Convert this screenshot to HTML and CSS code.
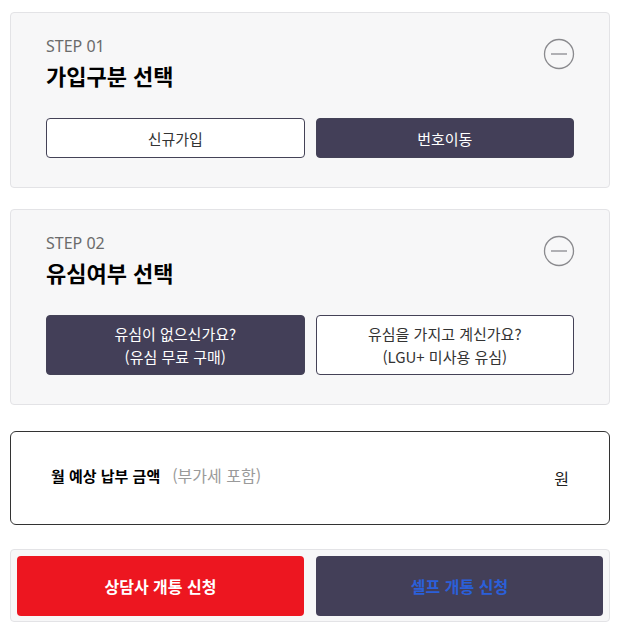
FILE: index.html
```html
<!DOCTYPE html>
<html lang="ko">
<head>
<meta charset="utf-8">
<link rel="stylesheet" href="styles.css">
</head>
<body>
<div class="page">
  <section class="card step-card">
    <div class="step-head">
      <div>
        <p class="step-no">STEP 01</p>
        <h2 class="step-title">가입구분 선택</h2>
      </div>
      <svg class="toggle" width="32" height="32" viewBox="0 0 32 32"><circle cx="16" cy="16" r="14.5" fill="none" stroke="#8a8a8e" stroke-width="1.3"/><line x1="8" y1="16" x2="24" y2="16" stroke="#8a8a8e" stroke-width="1.3"/></svg>
    </div>
    <div class="options">
      <button class="opt">신규가입</button>
      <button class="opt opt-on">번호이동</button>
    </div>
  </section>

  <section class="card step-card">
    <div class="step-head">
      <div>
        <p class="step-no">STEP 02</p>
        <h2 class="step-title">유심여부 선택</h2>
      </div>
      <svg class="toggle" width="32" height="32" viewBox="0 0 32 32"><circle cx="16" cy="16" r="14.5" fill="none" stroke="#8a8a8e" stroke-width="1.3"/><line x1="8" y1="16" x2="24" y2="16" stroke="#8a8a8e" stroke-width="1.3"/></svg>
    </div>
    <div class="options">
      <button class="opt opt-tall opt-on">유심이 없으신가요?<br>(유심 무료 구매)</button>
      <button class="opt opt-tall">유심을 가지고 계신가요?<br>(LGU+ 미사용 유심)</button>
    </div>
  </section>

  <section class="price">
    <p class="price-label"><strong>월 예상 납부 금액</strong><span class="vat">(부가세 포함)</span></p>
    <span class="won">원</span>
  </section>

  <section class="actions">
    <button class="act act-red">상담사 개통 신청</button>
    <button class="act act-dark">셀프 개통 신청</button>
  </section>
</div>
</body>
</html>
```

FILE: styles.css
```css
* { box-sizing: border-box; }
body {
  margin: 0;
  background: #fff;
  font-family: "Noto Sans", "Noto Sans CJK KR", sans-serif;
  color: #111;
}
.page {
  width: 600px;
  margin: 12px 0 0 10px;
  display: flex;
  flex-direction: column;
}
.card {
  background: #f7f7f8;
  border: 1px solid #e3e3e6;
  border-radius: 4px;
}
.step-card {
  padding: 23px 35px 29px 35px;
  margin-bottom: 21px;
}
.step-head {
  display: flex;
  justify-content: space-between;
  align-items: flex-start;
}
.toggle { margin-top: 2px; margin-right: -1px; }
.step-no {
  margin: 0;
  font-size: 16px;
  line-height: 20px;
  color: #6b6b6b;
}
.step-title {
  margin: 6px 0 0;
  font-size: 22px;
  line-height: 26px;
  font-weight: 700;
  font-family: "Noto Sans CJK KR", sans-serif;
  color: #000;
}
.options {
  display: grid;
  grid-template-columns: 1fr 1fr;
  gap: 11px;
  margin-top: 30px;
}
.opt {
  height: 40px;
  border: 1px solid #444257;
  border-radius: 4px;
  background: #fff;
  color: #333;
  font-family: "Noto Sans CJK KR", sans-serif;
  font-size: 15px;
  line-height: 23px;
  padding: 0;
}
.opt-tall { height: 60px; }
.opt-on {
  background: #433f58;
  color: #fff;
}
.price {
  margin-top: 5px;
  height: 94px;
  border: 1px solid #333;
  border-radius: 6px;
  background: #fff;
  display: flex;
  align-items: center;
  justify-content: space-between;
  padding: 0 40px 0 40px;
}
.price-label {
  margin: 0 0 6px;
  font-family: "Noto Sans CJK KR", sans-serif;
  font-size: 15px;
}
.price-label strong { font-weight: 700; color: #000; }
.vat { color: #9a9a9a; margin-left: 12px; font-size: 16px; }
.won {
  font-family: "Noto Sans CJK KR", sans-serif;
  font-size: 16px;
  color: #222;
}
.actions {
  margin-top: 24px;
  background: #f7f7f8;
  border: 1px solid #e3e3e6;
  border-radius: 4px;
  padding: 6px 6px 5px 6px;
  display: grid;
  grid-template-columns: 287px 287px;
  justify-content: space-between;
}
.act {
  height: 60px;
  border: none;
  border-radius: 4px;
  font-family: "Noto Sans CJK KR", sans-serif;
  font-size: 16px;
  font-weight: 700;
}
.act-red { background: #ed1620; color: #fff; }
.act-dark { background: #433f58; color: #2b5fd9; }
```
